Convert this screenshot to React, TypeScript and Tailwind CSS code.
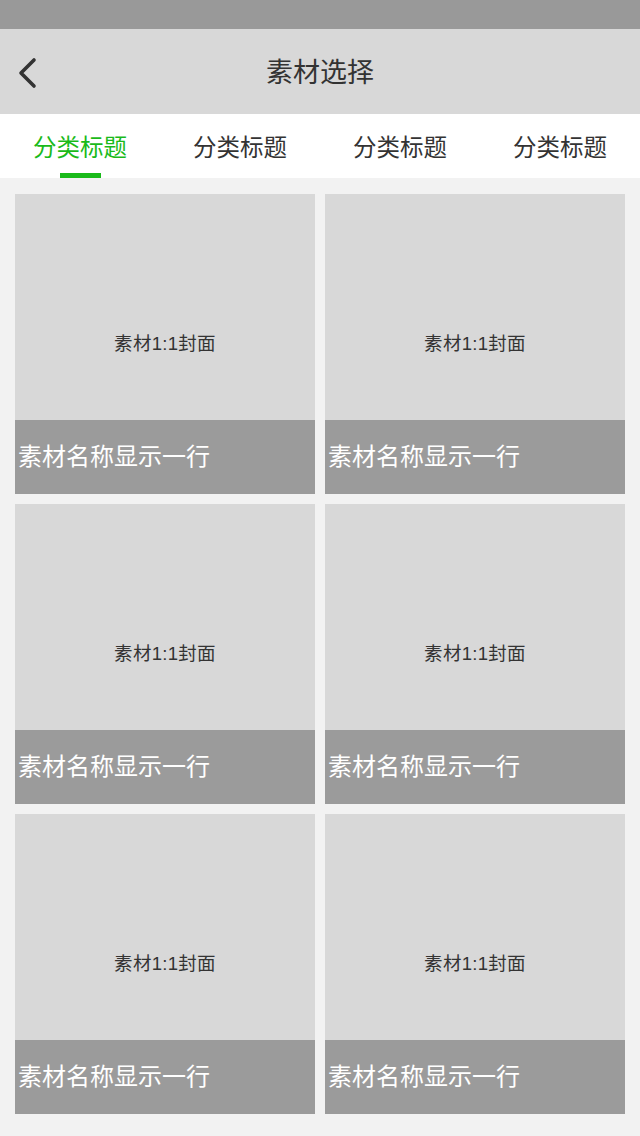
import React from "react";

const tabs = ["分类标题", "分类标题", "分类标题", "分类标题"];

function Card() {
  return (
    <div className="relative flex h-[300px] items-center justify-center bg-[#d8d8d8]">
      <span className="text-[18.5px] tracking-[0.3px] text-[#333333]">素材1:1封面</span>
      <div className="absolute bottom-0 left-0 right-0 flex h-[74px] items-center bg-[#9b9b9b] pl-[3px] text-[24px] text-white">
        素材名称显示一行
      </div>
    </div>
  );
}

export default function App() {
  return (
    <div
      className="flex min-h-[1136px] w-[640px] flex-col bg-[#f2f2f2]"
      style={{ fontFamily: '"Liberation Sans", "Noto Sans CJK SC", sans-serif' }}
    >
      <div className="h-[29px] bg-[#999999]" />
      <div className="relative flex h-[85px] items-center justify-center bg-[#d8d8d8] pt-[4px]">
        <svg
          className="absolute left-[16px] top-[28px]"
          width="24"
          height="32"
          viewBox="0 0 24 32"
          fill="none"
        >
          <path d="M18 3 L5 16 L18 29" stroke="#333333" strokeWidth="3.6" strokeLinecap="round" strokeLinejoin="round" />
        </svg>
        <span className="text-[27px] text-[#333333]">素材选择</span>
      </div>
      <div className="grid h-[64px] grid-cols-4 bg-white">
        {tabs.map((t, i) => (
          <div key={i} className="relative flex items-center justify-center pt-[5px]">
            <span className={`text-[23.5px] ${i === 0 ? "text-[#1aba1a]" : "text-[#333333]"}`}>{t}</span>
            {i === 0 && <div className="absolute bottom-0 left-[60px] h-[5px] w-[41px] bg-[#1aba1a]" />}
          </div>
        ))}
      </div>
      <div className="grid grid-cols-2 gap-[10px] px-[15px] pt-[16px]">
        {Array.from({ length: 6 }).map((_, i) => (
          <Card key={i} />
        ))}
      </div>
    </div>
  );
}
